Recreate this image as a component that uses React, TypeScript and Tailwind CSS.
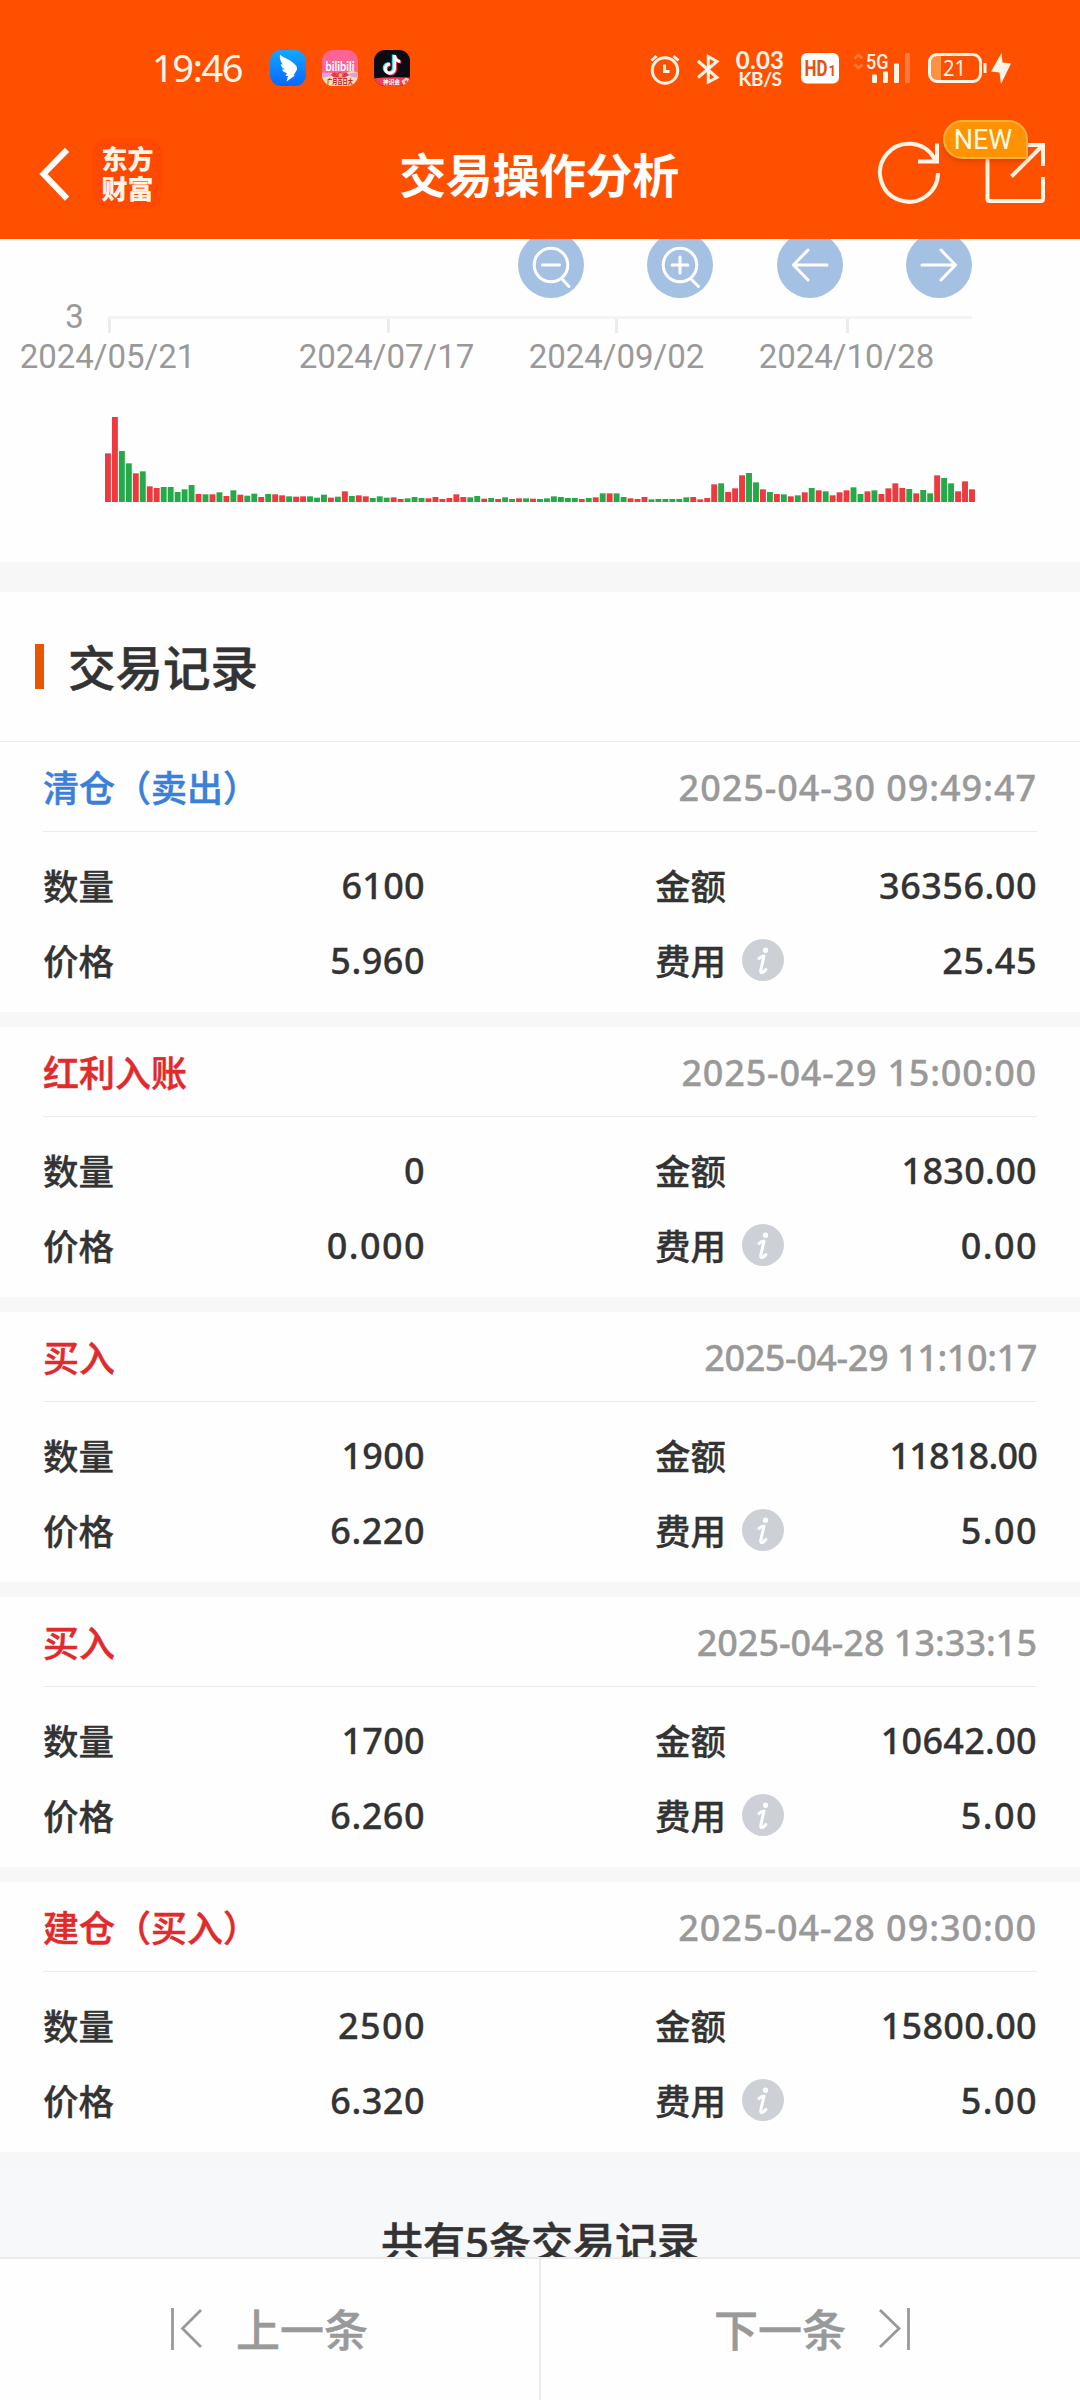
import type { ReactNode } from "react";

const SANS = "font-['Noto_Sans','Noto_Sans_CJK_SC',sans-serif]";

// Daily volume: colour of the bar (r = up, g = down) and its height in thirds of a pixel.
const VOLUME =
  "r146 r255 g153 g116 r86 g92 r47 r42 g45 g45 g30 g38 g51 r24 g23 r23 g29 r18 g35 r22 g19 g25 r15 g24 r23 r20 g17 r16 r17 g17 g13 g22 r13 g16 r32 g18 r20 r17 g12 g17 g13 r14 r9 g11 g15 g12 r11 r15 r9 r12 r23 r15 g14 g18 r10 g12 r9 g14 g9 r11 g11 r10 g9 " +
  "g11 g17 g15 g12 g12 r9 g12 r14 g26 r26 g26 g15 r11 r9 r15 g8 g9 g9 g9 g9 g14 r15 r8 r12 r53 g56 r30 r41 r80 g87 g59 r38 g30 r24 g23 r17 g20 r29 g42 r35 g32 r20 r29 r35 g44 g24 r32 g35 r24 r41 r56 r42 g39 r26 g36 g26 r80 g72 g56 r32 r62 r38";

const bars = VOLUME.split(" ").map((b) => ({ up: b[0] === "r", h: Number(b.slice(1)) / 3 }));

type Trade = {
  kind: string;
  tone: "blue" | "red";
  time: string;
  timeTracking: string;
  qty: string;
  price: string;
  amount: string;
  fee: string;
};

const trades: Trade[] = [
  { kind: "清仓（卖出）", tone: "blue", time: "2025-04-30 09:49:47", timeTracking: "tracking-[0.95px]", qty: "6100", price: "5.960", amount: "36356.00", fee: "25.45" },
  { kind: "红利入账", tone: "red", time: "2025-04-29 15:00:00", timeTracking: "tracking-[0.8px]", qty: "0", price: "0.000", amount: "1830.00", fee: "0.00" },
  { kind: "买入", tone: "red", time: "2025-04-29 11:10:17", timeTracking: "tracking-[-0.4px]", qty: "1900", price: "6.220", amount: "11818.00", fee: "5.00" },
  { kind: "买入", tone: "red", time: "2025-04-28 13:33:15", timeTracking: "tracking-[0px]", qty: "1700", price: "6.260", amount: "10642.00", fee: "5.00" },
  { kind: "建仓（买入）", tone: "red", time: "2025-04-28 09:30:00", timeTracking: "tracking-[0.97px]", qty: "2500", price: "6.320", amount: "15800.00", fee: "5.00" },
];

// Narrow ones tighten a figure, round zeros widen it.
function valueTracking(v: string) {
  if (v === "11818.00") return "tracking-[-0.8px]";
  if (v.includes("1")) return "tracking-[0.3px]";
  if (v === "0.000" || v === "0.00" || v === "5.00" || v === "2500") return "tracking-[1.4px] -mr-[1px]";
  return "tracking-[0.5px]";
}

function DingIcon() {
  return (
    <svg width="36" height="36" viewBox="0 0 36 36">
      <defs>
        <linearGradient id="ding" x1="0" y1="0" x2="0" y2="1">
          <stop offset="0" stopColor="#12a8ff" />
          <stop offset="1" stopColor="#0a66ff" />
        </linearGradient>
      </defs>
      <rect width="36" height="36" rx="11" fill="url(#ding)" />
      <path
        d="M10 4.5C13 8 20 9 25 14.5C27.5 17 27.5 19 26.5 20.5L23.5 25.5H25L16.5 31.5L18 26H15.5L17 23C14 22.5 12.5 21 12 19.5L15 19.3C12 18 10.8 16 10.8 14.2L13 14.5C10.5 11.5 9.3 8 10 4.5Z"
        fill="#fff"
      />
    </svg>
  );
}

function BiliIcon() {
  return (
    <svg width="36" height="36" viewBox="0 0 36 36">
      <clipPath id="bili">
        <rect width="36" height="36" rx="11" />
      </clipPath>
      <g clipPath="url(#bili)">
        <rect width="36" height="36" fill="#fb6495" />
        <path d="M0 25Q6 21 12 24T24 23T36 23V36H0Z" fill="#fbe0a8" />
        <path d="M0 22.500Q7 22 12 25.500L0 28Z" fill="#d9a3dc" />
        <path d="M36 22.500Q29 22 25 25.500L36 28Z" fill="#d9a3dc" />
        <path d="M9 25q3-5 6-1q3-4 6 0q3-3 6 1l-4 2.500h-11z" fill="#e8364f" />
        <circle cx="18.500" cy="25" r="2" fill="#ffc04a" />
        <text x="3.500" y="20.500" fontSize="14" fontWeight="700" fill="#fff" fontFamily="Lato, sans-serif" textLength="29" lengthAdjust="spacingAndGlyphs">
          bilibili
        </text>
        <text x="5" y="33.500" fontSize="6.500" fontWeight="900" fill="#c22a3d" fontFamily="Noto Sans CJK SC, sans-serif" textLength="26" lengthAdjust="spacingAndGlyphs">
          广月百日大
        </text>
      </g>
    </svg>
  );
}

const NOTE = "M20.500 5V18.500A4.600 4.600 0 1 1 15.900 14M20.500 5.500C21 9 23 11.200 26.200 11.500";

function TikTokIcon() {
  return (
    <svg width="36" height="36" viewBox="0 0 36 36">
      <clipPath id="tik">
        <rect width="36" height="36" rx="11" />
      </clipPath>
      <g clipPath="url(#tik)">
        <rect width="36" height="36" fill="#0c0b14" />
        <g fill="none" strokeWidth="3">
          <path d={NOTE} stroke="#25e6e4" transform="translate(-1.200 -.6)" />
          <path d={NOTE} stroke="#fb2c58" transform="translate(1 .8)" />
          <path d={NOTE} stroke="#fff" />
        </g>
        <path d="M0 28.500Q10 26.500 36 27.500V36H0Z" fill="#ee3f5c" />
        <path d="M30 36L27.500 31L32 27.500L36 30V36Z" fill="#fbd6b4" />
        <path d="M30.500 31.500l2-1.500l1 2l-2 1.500z" fill="#ee3f5c" />
        <text x="9" y="34" fontSize="6" fontWeight="700" fill="#fff" fontFamily="Noto Sans CJK SC, sans-serif" textLength="17" lengthAdjust="spacingAndGlyphs">
          神识会
        </text>
      </g>
    </svg>
  );
}

function StatusBar() {
  return (
    <div className="flex h-[106px] items-start pt-[50px]">
      <div className="-mt-[1px] ml-[152px] w-[118px] text-[38px] leading-[36px] tracking-[-1.4px] text-[#fff6ea]">19:46</div>
      <div className="flex gap-4">
        <DingIcon />
        <BiliIcon />
        <TikTokIcon />
      </div>
      <svg className="ml-[240px]" width="30" height="36" viewBox="650 50 30 36" fill="none" stroke="#fff4e6" strokeWidth="3">
        <circle cx="665" cy="70.500" r="12.700" />
        <path d="M664.500 64.500V71.500H669.500M651.500 60.500L656.500 56M673.500 56L678.500 60.500" />
      </svg>
      <svg className="ml-[16px]" width="24" height="36" viewBox="696 50 24 36" fill="none" stroke="#fff4e6" strokeWidth="3">
        <path d="M698 61L717 77.500L708.300 82V56.500L717 61.500L698 77.500" />
      </svg>
      <div className="ml-[10px] flex w-[60px] flex-col items-center font-['Lato',sans-serif] text-[#fff4e6]">
        <span className="text-[24px] leading-[20px] font-bold tracking-[0.3px]">0.03</span>
        <span className="text-[19px] leading-[18px] font-bold tracking-[-0.5px]">KB/S</span>
      </div>
      <svg className="ml-[11px]" width="38" height="36" viewBox="801 50 38 36">
        <rect x="801" y="53" width="38" height="30.500" rx="6" fill="#fff" />
        <g fill="#e85210" fontFamily="Roboto, sans-serif" fontWeight="700">
          <text x="804.500" y="76" fontSize="22" textLength="23" lengthAdjust="spacingAndGlyphs">HD</text>
          <text x="828.500" y="76" fontSize="14" textLength="7.500" lengthAdjust="spacingAndGlyphs">1</text>
        </g>
      </svg>
      <svg className="ml-[14px]" width="58" height="36" viewBox="853 50 58 36">
        <path d="M854.500 58.500L858.500 55L862.500 58.500M854.500 64.500L858.500 68L862.500 64.500" fill="none" stroke="#ff7a40" strokeWidth="2.500" />
        <text x="866" y="68.500" fontSize="20.500" fill="#fff4e6" fontFamily="Roboto, sans-serif" fontWeight="500" textLength="22.500" lengthAdjust="spacingAndGlyphs">
          5G
        </text>
        <g fill="#fff4e6">
          <rect x="872" y="74.500" width="5" height="8.500" rx="1" />
          <rect x="883" y="71.500" width="5" height="11.500" rx="1" />
          <rect x="894" y="63.500" width="5" height="19.500" rx="1" />
          <rect x="905" y="53" width="5" height="30" rx="1" fill="#ff7a40" />
        </g>
      </svg>
      <svg className="ml-[16px]" width="86" height="36" viewBox="927 50 86 36">
        <path d="M937 55.500H941V80.500H937Q931 80.500 931 74V62Q931 55.500 937 55.500Z" fill="#ff9240" />
        <rect x="929.500" y="54.500" width="51" height="27" rx="7.500" fill="none" stroke="#fff4e6" strokeWidth="3" />
        <path d="M985 63V73" stroke="#fff4e6" strokeWidth="3" />
        <text x="943" y="76" fontSize="22" fill="#fff4e6" fontFamily="Noto Sans, sans-serif" textLength="23" lengthAdjust="spacingAndGlyphs">
          21
        </text>
        <path d="M1001.500 53L991 71.500L999.500 72.500L1001 84L1011 63.500L1002.500 62.500Z" fill="#fff4e6" />
      </svg>
    </div>
  );
}

function TitleBar() {
  return (
    <div className="flex h-[133px] items-start">
      <svg className="ml-[38px] mt-[40px]" width="34" height="56" viewBox="38 146 34 56" fill="none" stroke="#fff" strokeWidth="6" strokeLinecap="square">
        <path d="M65 152L43.500 174L65 196.500" />
      </svg>
      <div className="ml-5 mt-8 flex h-[71px] w-[71px] flex-col items-center rounded-[17px] bg-[#ff4800] pt-[6px] text-[26px] leading-[30px] font-black text-[#fff4e6]">
        <span>东方</span>
        <span>财富</span>
      </div>
      <h1 className="ml-[196px] mt-[40px] w-[360px] text-center text-[47px] leading-[58px] font-bold tracking-[-0.4px] text-white">交易操作分析</h1>
      <svg className="ml-[158px] mt-[32px]" width="66" height="72" viewBox="877 138 66 72" fill="none" stroke="#fff4e6" strokeWidth="4">
        <path d="M938 173A29 29 0 1 1 934 158L937 162.500" />
        <path d="M937 143.500V161.500H918" />
      </svg>
      <div className="relative ml-[42px] mt-[32px] h-[72px] w-[64px]">
        <svg width="64" height="72" viewBox="985 138 64 72" fill="none" stroke="#fff4e6" strokeWidth="4">
          <path d="M1020 145H987.500V199Q987.500 201 989.500 201H1041Q1043 201 1043 199V177M1020 145H1043V166M1042 146L1011.500 176.500" />
        </svg>
        <div className="absolute -left-[42px] -top-[18px] flex h-[39px] w-[85px] items-center justify-center rounded-[20px] rounded-br-[2px] border-2 border-[#ffae3d] bg-[#ff9200] pt-[2px] pr-[5px] font-['Roboto',sans-serif] text-[27px] leading-none text-[#fffbe6] shadow-md shadow-orange-800/30">
          NEW
        </div>
      </div>
    </div>
  );
}

function RoundButton({ children }: { children: ReactNode }) {
  return (
    <svg width="66" height="66" viewBox="-33 -33 66 66">
      <circle r="33" fill="#a4c1e3" />
      <g fill="none" stroke="#fff" strokeWidth="3" strokeLinecap="round" strokeLinejoin="round">
        {children}
      </g>
    </svg>
  );
}

function Chart() {
  return (
    <section className="flex h-[323px] shrink-0 flex-col overflow-hidden bg-[#fefefe]">
      <div className="-mt-[7px] ml-[518px] flex gap-[63.300px]">
        <RoundButton>
          <path d="M16.800 0A16.800 16.800 0 1 1 -16.800 0A16.800 16.800 0 1 1 16.800 0M-8.500 0H8.500M12 15L18 21.500" />
        </RoundButton>
        <RoundButton>
          <path d="M16.800 0A16.800 16.800 0 1 1 -16.800 0A16.800 16.800 0 1 1 16.800 0M-8 0H8M0 -8V8M12 15L18.500 21.500" />
        </RoundButton>
        <RoundButton>
          <path d="M17 0H-16M-2 -15L-16.500 0L-2 15" />
        </RoundButton>
        <RoundButton>
          <path d="M-17 0H16M2 -15L16.500 0L2 15" />
        </RoundButton>
      </div>
      <svg className="-mt-[19px]" width="1080" height="224" viewBox="0 279 1080 224">
        <path d="M108 317.500H972" stroke="#f4f4f4" strokeWidth="3" />
        <path d="M109.500 319V333M388.500 319V333M616.500 319V333M847.500 319V333" stroke="#ebebeb" strokeWidth="3" />
        <g fill="#999" fontFamily="Roboto, sans-serif" fontSize="33" textAnchor="middle">
          <text x="74.500" y="328">3</text>
          <text x="107.500" y="368">2024/05/21</text>
          <text x="386.500" y="368">2024/07/17</text>
          <text x="616.500" y="368">2024/09/02</text>
          <text x="846.500" y="368">2024/10/28</text>
        </g>
        {bars.map((b, i) => (
          <rect key={i} x={105 + i * 6.968} y={502 - b.h} width="5.900" height={b.h} fill={b.up ? "#ee3a3e" : "#24aa48"} />
        ))}
      </svg>
    </section>
  );
}

function InfoIcon() {
  return (
    <svg className="-mt-[1px] ml-[16px]" width="42" height="42" viewBox="0 0 42 42">
      <circle cx="21" cy="21" r="21" fill="#cdd0d6" />
      <circle cx="23.500" cy="11.300" r="2.700" fill="#fff" />
      <path d="M17 19.500Q19.500 17 22 17L18.800 31Q18.300 34 20.300 33.500Q22 33 23.800 30.500" fill="none" stroke="#fff" strokeWidth="3" strokeLinecap="round" strokeLinejoin="round" />
    </svg>
  );
}

function Field({ label, value, info }: { label: string; value: string; info?: boolean }) {
  return (
    <div className="flex h-[75px] items-center">
      <span className="text-[35.500px] leading-[44px]">{label}</span>
      {info && <InfoIcon />}
      <span className={`ml-auto text-[36px] leading-[44px] ${valueTracking(value)}`}>{value}</span>
    </div>
  );
}

function TradeCard({ t }: { t: Trade }) {
  return (
    <article className="h-[285px] shrink-0 border-b-[15px] border-[#f7f7f7] bg-[#fefefe] px-[43px] font-medium">
      <div className="flex h-[90px] items-center justify-between border-b border-[#ebebeb] pt-[2px] text-[36px]">
        <span className={t.tone === "blue" ? "pt-[2px] text-[#3a80d8] [-webkit-text-stroke:0.5px]" : "pt-[2px] text-[#e02a2c] [-webkit-text-stroke:0.5px]"}>{t.kind}</span>
        <span className={`text-[#999] [-webkit-text-stroke:0.3px] ${t.timeTracking}`}>{t.time}</span>
      </div>
      <div className="mt-[16px] grid grid-cols-[382px_382px] justify-between text-[#333] [-webkit-text-stroke:0.3px]">
        <Field label="数量" value={t.qty} />
        <Field label="金额" value={t.amount} />
        <Field label="价格" value={t.price} />
        <Field label="费用" value={t.fee} info />
      </div>
    </article>
  );
}

export default function App() {
  return (
    <div className={`flex h-[2400px] w-[1080px] flex-col overflow-hidden bg-[#f7f8fa] ${SANS}`}>
      <header className="h-[239px] shrink-0 bg-[#ff5000]">
        <StatusBar />
        <TitleBar />
      </header>
      <main className="flex min-h-0 flex-1 flex-col overflow-hidden">
        <Chart />
        <div className="h-[30px] shrink-0 bg-[#f7f7f7]" />
        <div className="flex h-[150px] shrink-0 items-center border-b border-[#ebebeb] bg-[#fefefe] pl-[35px]">
          <span className="h-[45px] w-[9px] bg-[#eb5500]" />
          <h2 className="ml-[24px] pt-[2px] text-[47.500px] leading-none font-medium text-[#333] [-webkit-text-stroke:0.5px]">交易记录</h2>
        </div>
        {trades.map((t) => (
          <TradeCard key={t.time} t={t} />
        ))}
        <p className="mt-[45px] shrink-0 text-center text-[42px] leading-[60px] font-medium text-[#333] [-webkit-text-stroke:0.5px]">共有5条交易记录</p>
      </main>
      <footer className="flex h-[143px] shrink-0 border-t-2 border-[#ebebeb] bg-[#fefefe] text-[44px] font-medium text-[#999]">
        <button className="flex w-[541px] items-start border-r-2 border-[#ebebeb] pl-[169px] pt-[46px]">
          <svg width="36" height="48" viewBox="0 0 36 48" fill="none" stroke="#999" strokeWidth="2.800">
            <path d="M3.500 3V45M32 5L13.500 23.500L32 42" />
          </svg>
          <span className="ml-[31px] leading-[50px] [-webkit-text-stroke:0.5px]">上一条</span>
        </button>
        <button className="flex flex-1 items-start pl-[173px] pt-[46px]">
          <span className="leading-[50px] [-webkit-text-stroke:0.5px]">下一条</span>
          <svg className="ml-[31px]" width="36" height="48" viewBox="0 0 36 48" fill="none" stroke="#999" strokeWidth="2.800">
            <path d="M31.500 3V45M3 5L22 23.500L3 42" />
          </svg>
        </button>
      </footer>
    </div>
  );
}
